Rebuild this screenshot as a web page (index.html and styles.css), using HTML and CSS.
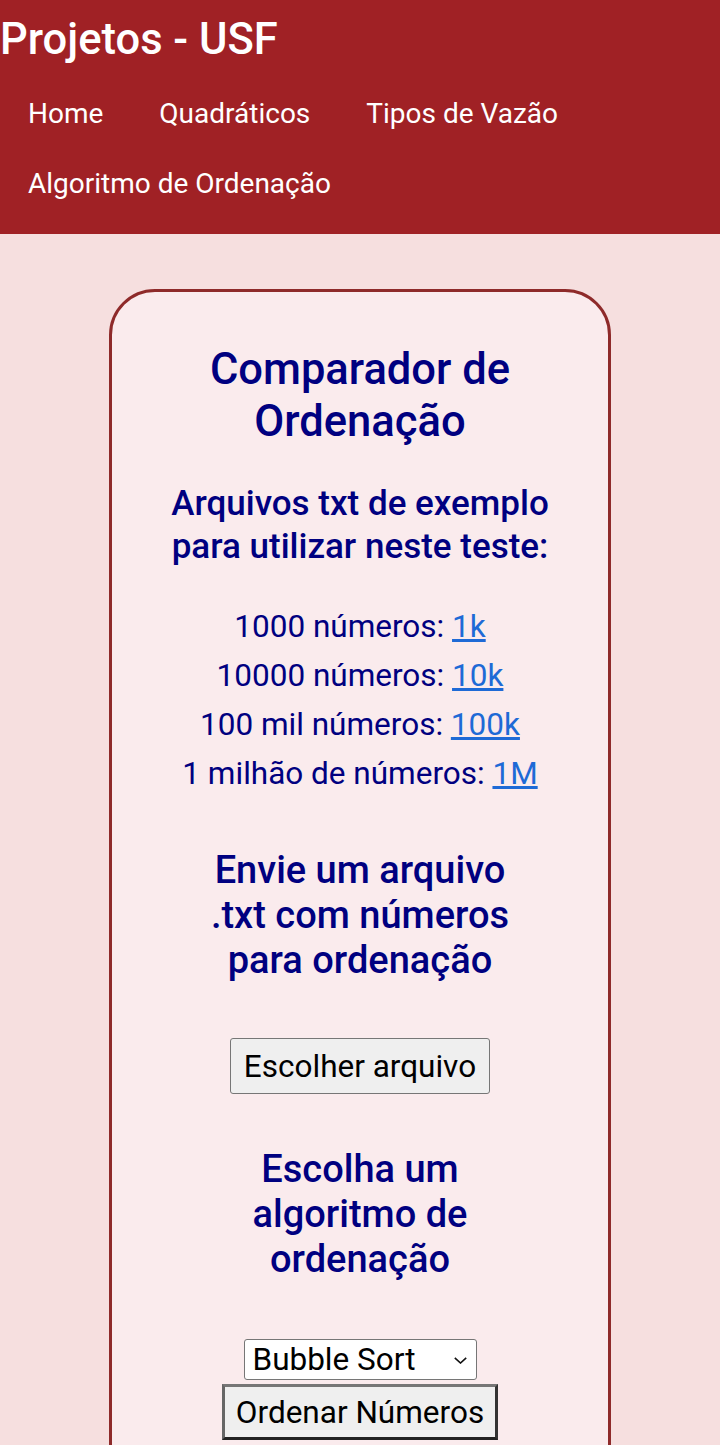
FILE: index.html
```html
<!DOCTYPE html>
<html lang="pt-BR">
<head>
<meta charset="utf-8">
<title>Comparador de Ordenação</title>
<link rel="stylesheet" href="styles.css">
</head>
<body>
<header class="topbar">
  <h1 class="brand">Projetos - USF</h1>
  <nav class="menu">
    <a class="menu-link" href="#">Home</a>
    <a class="menu-link" href="#">Quadráticos</a>
    <a class="menu-link" href="#">Tipos de Vazão</a>
    <a class="menu-link" href="#">Algoritmo de Ordenação</a>
  </nav>
</header>
<main class="page">
  <section class="card">
    <h2 class="card-title">Comparador de Ordenação</h2>
    <h3 class="card-subtitle">Arquivos txt de exemplo para utilizar neste teste:</h3>
    <ul class="samples">
      <li>1000 números: <a href="#">1k</a></li>
      <li>10000 números: <a href="#">10k</a></li>
      <li>100 mil números: <a href="#">100k</a></li>
      <li>1 milhão de números: <a href="#">1M</a></li>
    </ul>
    <form class="sort-form">
      <label class="field-label upload-label">Envie um arquivo .txt com números para ordenação</label>
      <button type="button" class="file-btn">Escolher arquivo</button>
      <label class="field-label algo-label">Escolha um algoritmo de ordenação</label>
      <span class="select-wrap">
        <select class="algo-select">
          <option>Bubble Sort</option>
          <option>Insertion Sort</option>
          <option>Selection Sort</option>
        </select>
        <svg class="chevron" width="13" height="7" viewBox="0 0 13 7"><path d="M0.8 0.8 L6.5 6 L12.2 0.8" fill="none" stroke="#111" stroke-width="1.6"/></svg>
      </span>
      <button type="button" class="submit-btn">Ordenar Números</button>
    </form>
  </section>
</main>
</body>
</html>
```

FILE: styles.css
```css
* { box-sizing: border-box; }

body {
  margin: 0;
  background: #f6dfdf;
  font-family: Roboto, "Noto Sans", sans-serif;
}

.topbar {
  background: #a02125;
  color: #fff;
  padding: 14px 0 15px;
}

.brand {
  margin: 0;
  font-size: 43.5px;
  line-height: 52px;
  font-weight: 500;
}

.menu {
  display: flex;
  flex-wrap: wrap;
  margin-top: 13px;
}

.menu-link {
  color: #fff;
  text-decoration: none;
  font-size: 28px;
  line-height: 70px;
  padding: 0 28px;
}

.page {
  display: flex;
  justify-content: center;
  padding-top: 55px;
}

.card {
  width: 502px;
  background: #faebed;
  border: 3px solid #8e2a2a;
  border-radius: 46px;
  padding: 52px 40px 90px;
  text-align: center;
  color: #000080;
  display: flex;
  flex-direction: column;
  align-items: center;
}

.card-title {
  margin: 0;
  font-size: 43.5px;
  line-height: 52px;
  font-weight: 500;
}

.card-subtitle {
  margin: 34px 0 0;
  font-size: 35px;
  line-height: 43px;
  font-weight: 500;
}

.samples {
  list-style: none;
  margin: 34px 0 0;
  padding: 0;
  font-size: 31.5px;
  line-height: 49px;
}

.samples a {
  color: #1e6ad6;
}

.sort-form {
  display: flex;
  flex-direction: column;
  align-items: center;
}

.field-label {
  display: block;
  max-width: 330px;
  font-size: 38px;
  line-height: 45px;
  font-weight: 500;
}

.upload-label { margin-top: 50px; }

.file-btn {
  margin-top: 55px;
  height: 56px;
  padding: 0 13px;
  font-family: Roboto, "Noto Sans", sans-serif;
  font-size: 31.5px;
  color: #000;
  background: #efefef;
  border: 1px solid #767676;
  border-radius: 3px;
}

.algo-label { margin-top: 53px; }

.select-wrap {
  position: relative;
  margin-top: 57px;
  display: inline-block;
}

.algo-select {
  -webkit-appearance: none;
  appearance: none;
  display: block;
  width: 233px;
  height: 41px;
  padding: 0 0 0 8px;
  font-family: Roboto, "Noto Sans", sans-serif;
  font-size: 31.5px;
  color: #000;
  background: #fff;
  border: 1px solid #767676;
  border-radius: 3px;
}

.chevron {
  position: absolute;
  right: 10px;
  top: 18px;
  pointer-events: none;
}

.submit-btn {
  margin-top: 4px;
  height: 56px;
  padding: 0 11px;
  font-family: Roboto, "Noto Sans", sans-serif;
  font-size: 31.5px;
  color: #000;
  background: #efefef;
  border: 3px solid;
  border-color: #767676 #333 #222 #666;
  border-radius: 0;
}
```
